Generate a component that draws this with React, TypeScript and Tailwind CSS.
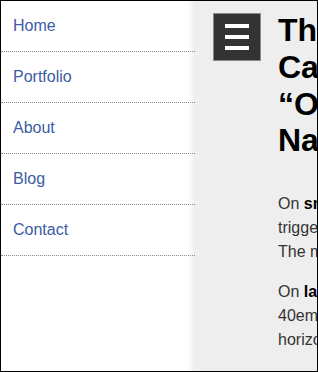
const links = ['Home', 'Portfolio', 'About', 'Blog', 'Contact'];

export default function App() {
  return (
    <div
      className="w-[318px] h-[372px] border border-black overflow-hidden flex bg-white"
      style={{ fontFamily: '"Liberation Sans", Arial, sans-serif' }}
    >
      {/* Off-canvas menu */}
      <nav className="w-[194px] shrink-0 bg-white shadow-[inset_-6px_0_6px_-4px_rgba(0,0,0,0.1)]">
        <ul>
          {links.map((l) => (
            <li key={l} className="border-b border-dotted border-[#888]">
              <a href="#" className="block pl-3 py-4 leading-[18px] text-base text-[#3d5ca5]">
                {l}
              </a>
            </li>
          ))}
        </ul>
      </nav>

      {/* Main content */}
      <main className="flex-1 bg-[#eeeeee] pt-[11px] pl-[18px] flex gap-[17px] overflow-hidden">
        <button className="mt-[1px] w-12 h-12 shrink-0 bg-[#333] border border-[#8a8a8a] flex flex-col items-center justify-center gap-[7px]">
          <span className="block w-6 h-1 bg-white" />
          <span className="block w-6 h-1 bg-white" />
          <span className="block w-6 h-1 bg-white" />
        </button>
        <div className="w-[420px] shrink-0">
          <h1 className="text-[32px] leading-[36.8px] font-bold text-black mb-[33px] whitespace-nowrap">
            The
            <br />
            Canonical
            <br />
            “Off-Canvas”
            <br />
            Navigation
          </h1>
          <p className="text-base leading-6 text-[#333] mb-4 whitespace-nowrap">
            On <b className="text-black">small screens</b>, the menu button
            <br />
            triggers the off-canvas navigation.
            <br />
            The menu slides in from the left.
          </p>
          <p className="text-base leading-6 text-[#333] whitespace-nowrap">
            On <b className="text-black">large screens</b> (wider than
            <br />
            40em), the navigation becomes a
            <br />
            horizontal bar across the top.
          </p>
        </div>
      </main>
    </div>
  );
}
